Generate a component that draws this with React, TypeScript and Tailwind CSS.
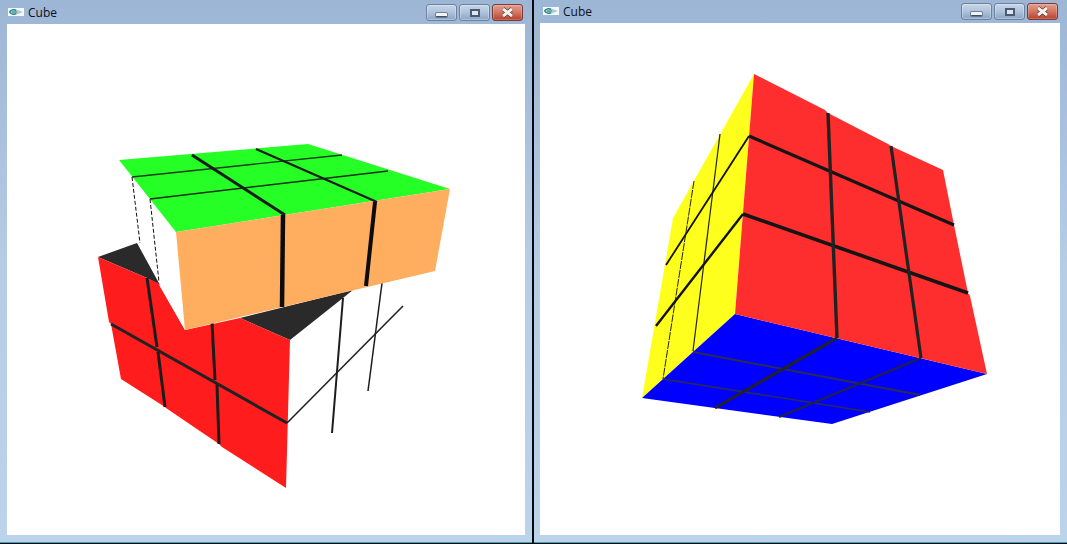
const RED_L = '#ff1c1c';
const RED_R = '#ff2e2e';
const DARK = '#1c1c1c';

type Line = [number, number, number, number, number, string?, string?];

const Lines = ({ items }: { items: Line[] }) => (
    <>
        {items.map(([x1, y1, x2, y2, w, color, dash], i) => (
            <line key={i} x1={x1} y1={y1} x2={x2} y2={y2} strokeWidth={w} stroke={color ?? DARK} strokeDasharray={dash} />
        ))}
    </>
);

const BrokenCube = () => (
    <svg className="block w-full h-full" viewBox="7 24 518 511">
        {/* lower layer */}
        <polygon fill="#2a2a2a" points="98,257 137,243 160,285 147,278" />
        <polygon fill="#2a2a2a" points="240,318 353,290 290,340" />
        <polygon
            fill={RED_L}
            points="98,257 147,278 158,283 185,330 240,318 290,340 286,488 222,447 219,444 166,408 165,407 121,379 111,324 109,322"
        />
        <Lines
            items={[
                [111, 324, 287, 423, 3, '#222'],
                [147, 278, 157, 347, 3],
                [158, 352, 165, 407, 3],
                [212, 323, 215, 380, 3],
                [217, 385, 219, 444, 3],
                [287, 423, 403, 306, 1.6, '#222'],
                [343, 298, 332, 433, 2],
                [382, 283, 368, 391, 1.5],
                [132, 177, 140, 243, 1, '#111', '4 2'],
                [150, 199, 159, 282, 1, '#111', '4 2'],
            ]}
        />
        {/* turned top layer */}
        <polygon fill="#ffffff" points="160,286 176,232 185,330" />
        <polygon fill="#26ff26" points="119,160 308,144 450,189 176,232" />
        <polygon fill="#ffae60" points="176,232 450,189 435,271 185,330" />
        <Lines
            items={[
                [132, 177, 342, 155, 1.3, '#1a3a1a'],
                [150, 199, 388, 171, 1.6, '#123012'],
                [192, 155, 285, 215, 3],
                [256, 149, 377, 202, 2.4],
                [283, 215, 282, 307, 4.5, '#0c0c0c'],
                [375, 202, 366, 286, 4, '#0c0c0c'],
            ]}
        />
    </svg>
);

const SolvedCube = () => (
    <svg className="block w-full h-full" viewBox="540 23 520 512">
        <polygon fill="#ffff1e" points="754,74 735,314 642,398 673,218" />
        <polygon fill="#0000ff" points="735,314 987,374 832,424 642,398" />
        <polygon
            fill={RED_R}
            points="754,74 825,110 828,113 888,144 891,146 943,170 954,225 968,293 970,296 987,374 735,314"
        />
        <Lines
            items={[
                [720, 134, 693, 351, 1.2, '#222'],
                [694, 181, 663, 379, 1, '#222', '8 1'],
                [749, 136, 666, 265, 1.8, '#111'],
                [743, 214, 656, 326, 2.4, '#111'],
                [749, 136, 954, 225, 3.2, '#151515'],
                [743, 214, 968, 293, 3.6, '#151515'],
                [828, 113, 837, 338, 3.4, '#222'],
                [891, 146, 921, 358, 3.2, '#222'],
                [693, 352, 920, 395, 2, '#2a2a55'],
                [663, 379, 870, 412, 1.6, '#2a2a55'],
                [837, 338, 715, 408, 3, '#222'],
                [921, 358, 779, 417, 2, '#222240'],
            ]}
        />
    </svg>
);

const AppIcon = () => (
    <svg className="block shrink-0" width="16" height="8" viewBox="0 0 16 8">
        <rect width="16" height="8" fill="#f4fafa" />
        <path d="M1 4C3 .8 8 .8 11 2.6L15 4 11 5.4C8 7.2 3 7.2 1 4Z" fill="#a9ccd0" />
        <path d="M1.5 4C3 1.6 6 1.4 8 2.4M1.5 4C3 6.4 6 6.6 8 5.6" fill="none" stroke="#1f7f8a" strokeWidth="1.4" />
        <path d="M4 4h5" stroke="#2f8a93" strokeWidth="1" />
    </svg>
);

const WindowButtons = () => (
    <div className="flex gap-[2px]">
        <div className="w-[31px] h-[17px] flex items-center justify-center rounded-[3px] border border-[#6d819c] shadow-[inset_0_0_0_1px_rgba(255,255,255,0.3)] bg-linear-to-b from-[#c8d7e9] via-[#aec2da] to-[#8ba5c4]">
            <span className="block w-[11px] h-[4px] mt-[5px] rounded-[1px] bg-[#f2f5f8] border-b border-b-[#3f4f66] shadow-[0_0_0_1px_rgba(70,86,108,0.6)]" />
        </div>
        <div className="w-[31px] h-[17px] flex items-center justify-center rounded-[3px] border border-[#6d819c] shadow-[inset_0_0_0_1px_rgba(255,255,255,0.3)] bg-linear-to-b from-[#c8d7e9] via-[#aec2da] to-[#8ba5c4]">
            <span className="block w-[10px] h-[8px] bg-[#dfe6ee] border-2 border-[#4a5a70]" />
        </div>
        <div className="w-[31px] h-[17px] flex items-center justify-center rounded-[3px] border border-[#7a3a36] shadow-[inset_0_0_0_1px_rgba(255,255,255,0.22)] bg-linear-to-b from-[#dfa090] via-[#d27660] to-[#b63f2c]">
            <svg width="15" height="11" viewBox="0 0 15 11">
                <path d="M3 2 12 9M12 2 3 9" stroke="#5a2f2c" strokeWidth="4.2" />
                <path d="M3 2 12 9M12 2 3 9" stroke="#f6f1ee" strokeWidth="3" />
            </svg>
        </div>
    </div>
);

const CubeWindow = ({ className, children }: { className: string; children: React.ReactNode }) => (
    <div className={`flex flex-col h-[543px] border-b border-[#3f9fb2] bg-linear-to-b from-[#9db6d5] via-[#b6cde6] to-[#bcd3ec] ${className}`}>
        {children}
    </div>
);

const App = () => (
    <div className="flex w-[1067px] h-[544px] bg-[#05090c] overflow-hidden font-['Open_Sans','Noto_Sans',sans-serif]">
        <CubeWindow className="w-[532px]">
            <div className="h-[24px] shrink-0 flex items-start pl-[8px] pr-[9px]">
                <div className="flex items-center gap-[4px] mt-[4px] h-[16px]">
                    <AppIcon />
                    <span className="mt-[1px] text-[12px] leading-none text-[#0b0f1c]">Cube</span>
                </div>
                <div className="ml-auto mt-[4px]">
                    <WindowButtons />
                </div>
            </div>
            <div className="ml-[7px] w-[518px] h-[511px] bg-white">
                <BrokenCube />
            </div>
        </CubeWindow>
        <div className="w-[2px] shrink-0" />
        <CubeWindow className="w-[533px]">
            <div className="h-[23px] shrink-0 flex items-start pl-[9px] pr-[9px]">
                <div className="flex items-center gap-[4px] mt-[3px] h-[16px]">
                    <AppIcon />
                    <span className="mt-[1px] text-[12px] leading-none text-[#0b0f1c]">Cube</span>
                </div>
                <div className="ml-auto mt-[3px]">
                    <WindowButtons />
                </div>
            </div>
            <div className="ml-[6px] w-[520px] h-[512px] bg-white">
                <SolvedCube />
            </div>
        </CubeWindow>
    </div>
);

export default App;
